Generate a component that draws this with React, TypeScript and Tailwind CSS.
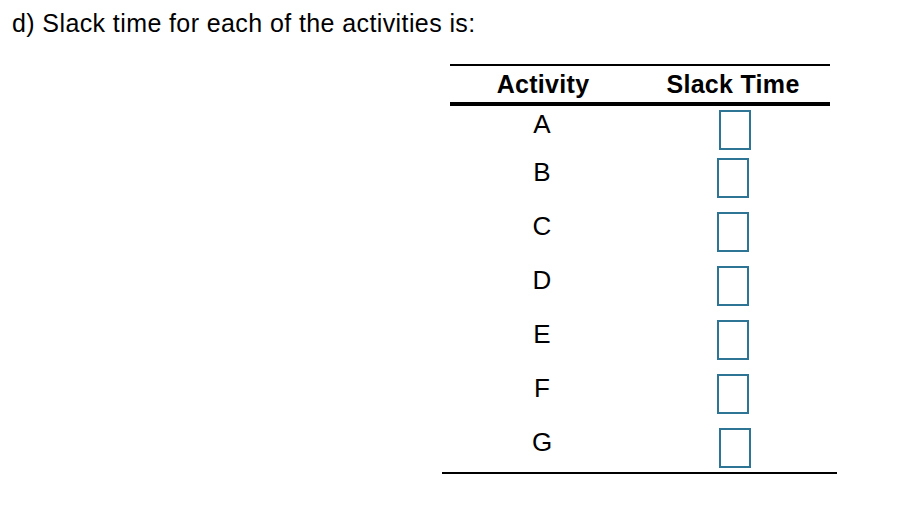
import React from "react";

const rows: { label: string; h: string; shift: boolean }[] = [
  { label: "A", h: "h-[48px]", shift: true },
  { label: "B", h: "h-[54px]", shift: false },
  { label: "C", h: "h-[54px]", shift: false },
  { label: "D", h: "h-[54px]", shift: false },
  { label: "E", h: "h-[54px]", shift: false },
  { label: "F", h: "h-[54px]", shift: false },
  { label: "G", h: "h-[48px]", shift: true },
];

export default function App() {
  return (
    <div
      className="w-[920px] h-[526px] bg-white text-black overflow-hidden"
      style={{ fontFamily: '"Liberation Sans", Arial, sans-serif' }}
    >
      <div className="pl-[12px] pt-[11px] text-[25px] leading-none tracking-[0.4px]">
        d) Slack time for each of the activities is:
      </div>
      <div className="ml-[450px] mt-[28px] w-[380px]">
        <div className="h-[2px] bg-black" />
        <div className="grid grid-cols-[186px_194px] h-[36px] items-center text-[25px] leading-none font-bold tracking-[0.3px]">
          <div className="text-center">Activity</div>
          <div className="text-center">Slack Time</div>
        </div>
        <div className="h-[4px] bg-black" />
        {rows.map((r) => (
          <div
            key={r.label}
            className={`grid grid-cols-[186px_194px] ${r.h}`}
          >
            <div className="text-center text-[26px] leading-none pt-[5px] pr-[2px]">
              {r.label}
            </div>
            <div className="flex justify-center pt-[4px]">
              <div
                className={`w-[32px] h-[40px] border-[2.5px] border-[#2e7494] ${
                  r.shift ? "ml-[4px]" : ""
                }`}
              />
            </div>
          </div>
        ))}
        <div className="h-[2px] bg-black ml-[-8px] mr-[-7px]" />
      </div>
    </div>
  );
}
